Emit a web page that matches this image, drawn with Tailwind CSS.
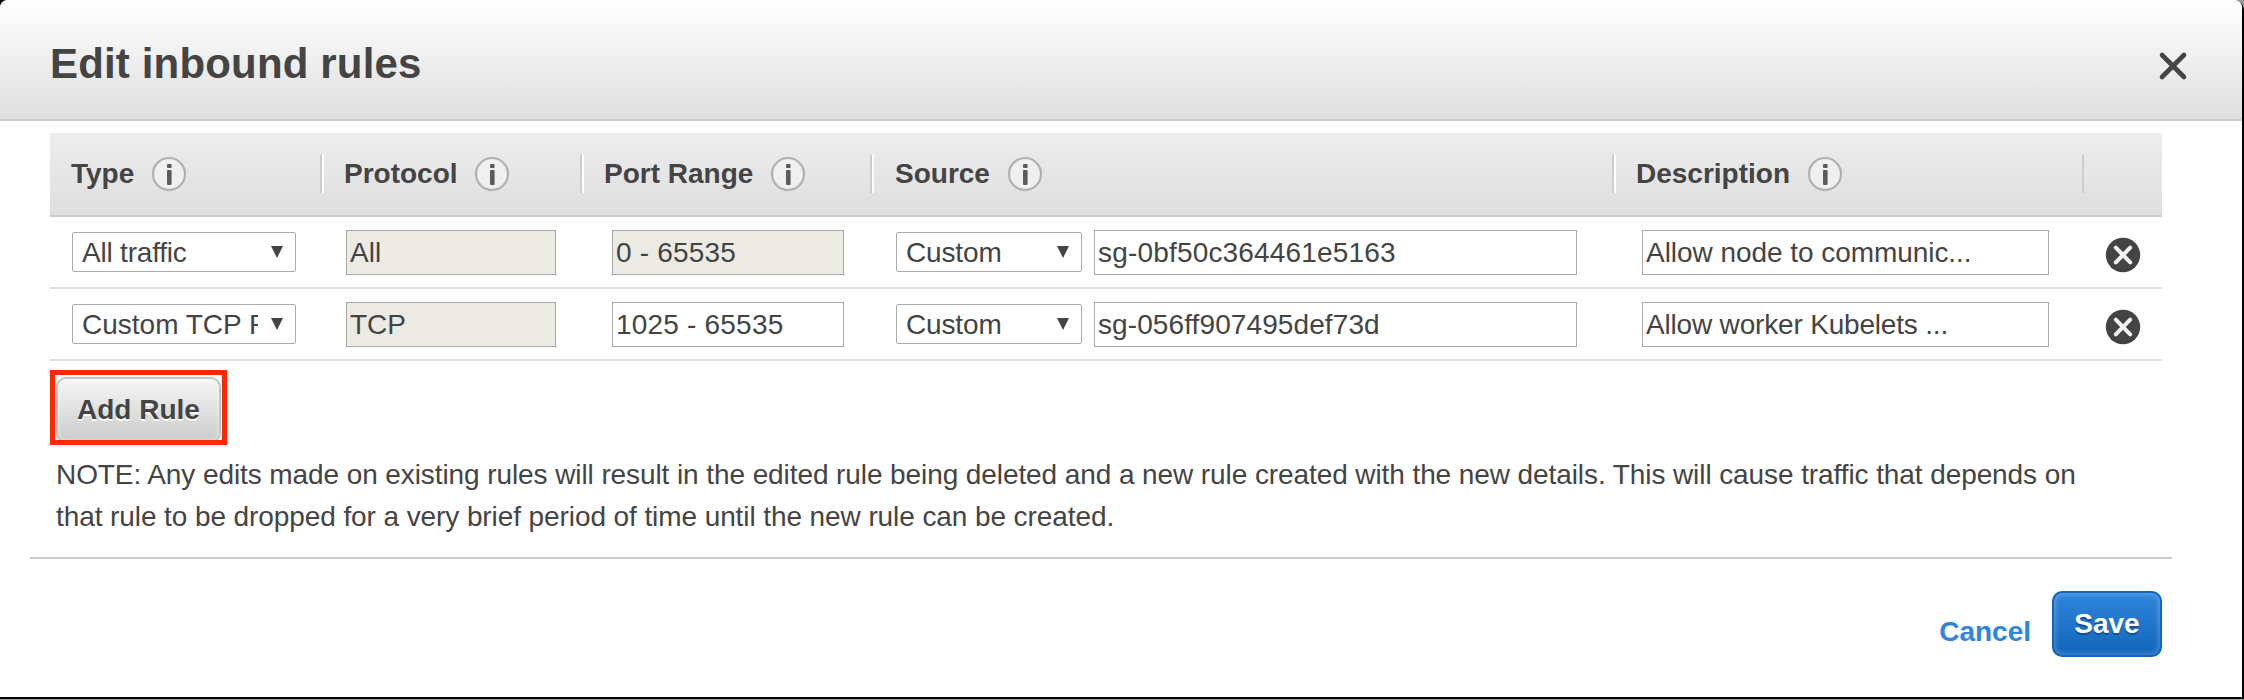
<!DOCTYPE html>
<html lang="en">
<head>
<meta charset="utf-8">
<title>Edit inbound rules</title>
<script src="https://cdn.jsdelivr.net/npm/@tailwindcss/browser@4"></script>
</head>
<body class="w-[2244px] h-[700px] overflow-hidden bg-[#999] font-['Liberation_Sans',Arial,sans-serif] text-[28px] text-[#444]">
<svg class="hidden">
  <symbol id="info" viewBox="0 0 36 36">
    <circle cx="18" cy="18" r="16" fill="#efefef" stroke="#b0b0b0" stroke-width="2.2"/>
    <rect x="16" y="8" width="4.6" height="4" rx="1" fill="#5c5c5c"/>
    <rect x="16" y="14" width="4.6" height="15" rx="1" fill="#5c5c5c"/>
  </symbol>
  <symbol id="remove" viewBox="0 0 36 36">
    <circle cx="18" cy="18" r="17.2" fill="#444"/>
    <path d="M10.8 10.6 25.2 25.4M25.2 10.6 10.8 25.4" stroke="#f4f4f4" stroke-width="4" stroke-linecap="round"/>
  </symbol>
  <symbol id="caret" viewBox="0 0 12 12"><path d="M0 0H12L6 12Z" fill="#444"/></symbol>
</svg>
<div class="h-[699px] rounded-tr-[10px] border-b-2 border-r-2 border-black bg-black">
<main class="flex h-[697px] flex-col rounded-t-[8px] bg-white">
  <header class="flex h-[121px] shrink-0 items-center justify-between rounded-t-[8px] border-b-2 border-[#ccc] bg-linear-to-b from-white to-[#dfdfdf] pl-[50px] pr-[54px] pt-[9px]">
    <h1 class="text-[42px] leading-[48px] font-bold tracking-[0.16px]">Edit inbound rules</h1>
    <svg class="mt-[4px] size-[30px]" viewBox="0 0 30 30"><path d="M4 4 26 26M26 4 4 26" stroke="#444" stroke-width="4.6" stroke-linecap="round"/></svg>
  </header>

  <section class="ml-[50px] mt-3 w-[2112px] shrink-0">
    <div class="grid h-[84px] grid-cols-[272px_260px_290px_742px_470px_78px] items-center border-b-2 border-[#ccc] bg-linear-to-b from-[#ededed] to-[#dedede] font-bold">
      <div class="flex h-[38px] items-center gap-[17px] border-r-2 border-[#ccc] pl-[21px]">Type<svg class="size-9"><use href="#info"/></svg></div>
      <div class="flex h-[38px] items-center gap-4 border-x-2 border-l-white border-r-[#ccc] pl-5">Protocol<svg class="size-9"><use href="#info"/></svg></div>
      <div class="flex h-[38px] items-center gap-[17px] border-x-2 border-l-white border-r-[#ccc] pl-5">Port Range<svg class="size-9"><use href="#info"/></svg></div>
      <div class="flex h-[38px] items-center gap-[17px] border-x-2 border-l-white border-r-[#ccc] pl-[21px]">Source<svg class="size-9"><use href="#info"/></svg></div>
      <div class="flex h-[38px] items-center gap-[17px] border-x-2 border-l-white border-r-[#ccc] pl-5">Description<svg class="size-9"><use href="#info"/></svg></div>
    </div>

    <div class="flex h-[72px] items-center border-b-2 border-[#dfdfdf] pl-[22px]">
      <div class="flex h-10 w-[224px] items-center justify-between rounded-[2px] border border-[#aaa] pl-[9px] pr-3"><span class="mt-0.5 w-[176px] overflow-hidden whitespace-nowrap tracking-[-0.2px]">All traffic</span><svg class="size-3"><use href="#caret"/></svg></div>
      <div class="mt-px ml-[50px] flex h-[45px] w-[210px] items-center border border-[#a9a9a9] bg-[#ebebe4] pl-[3px]">All</div>
      <div class="mt-px ml-[56px] flex h-[45px] w-[232px] items-center border border-[#a9a9a9] bg-[#ebebe4] pl-[3px] tracking-[0.2px]">0 - 65535</div>
      <div class="ml-[52px] flex h-10 w-[186px] items-center justify-between rounded-[2px] border border-[#aaa] pl-[9px] pr-3"><span class="mt-0.5 tracking-[-0.15px]">Custom</span><svg class="size-3"><use href="#caret"/></svg></div>
      <div class="mt-px ml-3 flex h-[45px] w-[483px] items-center border border-[#a9a9a9] pl-[3px] tracking-[0.18px]">sg-0bf50c364461e5163</div>
      <div class="mt-px ml-[65px] flex h-[45px] w-[407px] items-center border border-[#a9a9a9] pl-[3px] tracking-[-0.05px]">Allow node to communic...</div>
      <svg class="ml-14 mt-[5px] size-9"><use href="#remove"/></svg>
    </div>
    <div class="flex h-[72px] items-center border-b-2 border-[#dfdfdf] pl-[22px]">
      <div class="flex h-10 w-[224px] items-center justify-between rounded-[2px] border border-[#aaa] pl-[9px] pr-3"><span class="mt-0.5 w-[176px] overflow-hidden whitespace-nowrap">Custom TCP Rule</span><svg class="size-3"><use href="#caret"/></svg></div>
      <div class="mt-px ml-[50px] flex h-[45px] w-[210px] items-center border border-[#a9a9a9] bg-[#ebebe4] pl-[3px]">TCP</div>
      <div class="mt-px ml-[56px] flex h-[45px] w-[232px] items-center border border-[#a9a9a9] pl-[3px] tracking-[0.2px]">1025 - 65535</div>
      <div class="ml-[52px] flex h-10 w-[186px] items-center justify-between rounded-[2px] border border-[#aaa] pl-[9px] pr-3"><span class="mt-0.5 tracking-[-0.15px]">Custom</span><svg class="size-3"><use href="#caret"/></svg></div>
      <div class="mt-px ml-3 flex h-[45px] w-[483px] items-center border border-[#a9a9a9] pl-[3px] tracking-[0.1px]">sg-056ff907495def73d</div>
      <div class="mt-px ml-[65px] flex h-[45px] w-[407px] items-center border border-[#a9a9a9] pl-[3px] tracking-[-0.18px]">Allow worker Kubelets ...</div>
      <svg class="ml-14 mt-[5px] size-9"><use href="#remove"/></svg>
    </div>
  </section>

  <div class="ml-[50px] mt-[9px] h-[75px] w-[177px] shrink-0 overflow-hidden border-[5px] border-[#ff2600] px-px pt-[2px]">
    <button class="block h-[66px] w-[165px] rounded-[10px] border-2 border-[#c4c4c4] bg-linear-to-b from-[#f6f6f6] to-[#cbcbcb] font-bold text-shadow-[0_2px_0_#fff] shadow-[inset_0_0_4px_rgba(255,255,255,0.6)]">Add Rule</button>
  </div>

  <p class="ml-[56px] mt-[9px] w-[2060px] shrink-0 leading-[42px] tracking-[-0.09px]">NOTE: Any edits made on existing rules will result in the edited rule being deleted and a new rule created with the new details. This will cause traffic that depends on that rule to be dropped for a very brief period of time until the new rule can be created.</p>

  <footer class="ml-[30px] mt-[19px] flex w-[2142px] items-start justify-end gap-[21px] border-t-2 border-[#ccc] pr-[10px] pt-8">
    <a class="mt-[20px] leading-[42px] font-bold text-[#3184dd]">Cancel</a>
    <button class="h-[66px] w-[110px] rounded-[10px] border-2 border-[#1166bb] bg-linear-to-b from-[#2f85dc] to-[#1166bb] font-bold text-white text-shadow-[0_2px_0_#154e96] shadow-[inset_0_0_6px_rgba(255,255,255,0.35)]">Save</button>
  </footer>
</main>
</div>
</body>
</html>
